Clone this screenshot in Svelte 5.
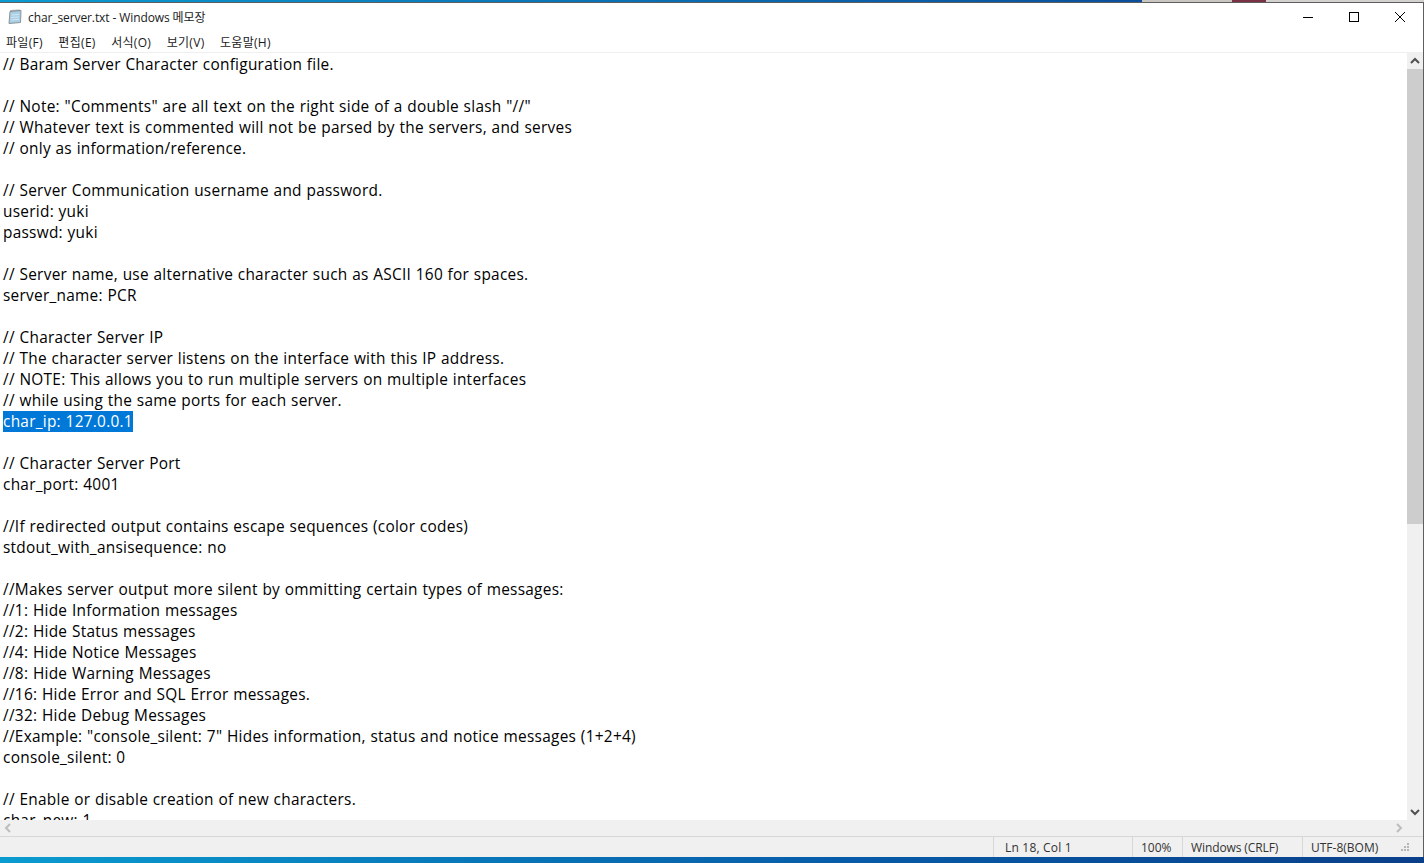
<script>
  const lines = [
    '// Baram Server Character configuration file.', '',
    '// Note: "Comments" are all text on the right side of a double slash "//"',
    '// Whatever text is commented will not be parsed by the servers, and serves',
    '// only as information/reference.', '',
    '// Server Communication username and password.',
    'userid: yuki', 'passwd: yuki', '',
    '// Server name, use alternative character such as ASCII 160 for spaces.',
    'server_name: PCR', '',
    '// Character Server IP',
    '// The character server listens on the interface with this IP address.',
    '// NOTE: This allows you to run multiple servers on multiple interfaces',
    '// while using the same ports for each server.',
    'char_ip: 127.0.0.1', '',
    '// Character Server Port', 'char_port: 4001', '',
    '//If redirected output contains escape sequences (color codes)',
    'stdout_with_ansisequence: no', '',
    '//Makes server output more silent by ommitting certain types of messages:',
    '//1: Hide Information messages', '//2: Hide Status messages', '//4: Hide Notice Messages',
    '//8: Hide Warning Messages', '//16: Hide Error and SQL Error messages.', '//32: Hide Debug Messages',
    '//Example: "console_silent: 7" Hides information, status and notice messages (1+2+4)',
    'console_silent: 0', '',
    '// Enable or disable creation of new characters.', 'char_new: 1'
  ];
  const menus = ['파일(F)', '편집(E)', '서식(O)', '보기(V)', '도움말(H)'];
</script>

<div class="page">
  <div class="strip">
    <div class="strip-blue"></div>
    <div class="strip-grey"></div>
    <div class="strip-pic"></div>
    <div class="strip-end"></div>
  </div>
  <div class="window">
    <header class="titlebar">
      <svg class="app-icon" width="16" height="16" viewBox="0 0 16 16">
        <path d="M3 2.5 L14 1.5 L13.5 13.5 L2 14.5 Z" fill="#a9cfe6" stroke="#8a949a" />
        <path d="M4.5 6 L12 5.4 M4.3 8.5 L12 7.9 M4.2 11 L12 10.4" stroke="#d6e6f0" />
        <path d="M4 2.4 V1 M6 2.2 V0.8 M8 2 V0.7 M10 1.9 V0.6 M12 1.7 V0.5" stroke="#777" />
      </svg>
      <span class="title">char_server.txt - Windows 메모장</span>
      <div class="controls">
        <svg width="12" height="12" viewBox="0 0 12 12"><path d="M1 6.5 H11" stroke="#000" /></svg>
        <svg width="12" height="12" viewBox="0 0 12 12"><rect x="1.5" y="1.5" width="9" height="9" fill="none" stroke="#000" /></svg>
        <svg width="12" height="12" viewBox="0 0 12 12"><path d="M1 1 L11 11 M11 1 L1 11" stroke="#000" /></svg>
      </div>
    </header>
    <nav class="menubar">
      {#each menus as m}<span>{m}</span>{/each}
    </nav>
    <div class="editor">
      <div class="text">
        {#each lines as l}
          <div class="line"><span class:sel={l.startsWith('char_ip')}>{l}</span></div>
        {/each}
      </div>
      <div class="vscroll">
        <svg class="arrow" width="16" height="16" viewBox="0 0 16 16"><path d="M4 10 L8 6 L12 10" fill="none" stroke="#505050" stroke-width="2" /></svg>
        <div class="track"><div class="thumb"></div></div>
        <svg class="arrow" width="16" height="16" viewBox="0 0 16 16"><path d="M4 6 L8 10 L12 6" fill="none" stroke="#505050" stroke-width="2" /></svg>
      </div>
    </div>
    <div class="hscroll">
      <svg width="16" height="16" viewBox="0 0 16 16"><path d="M10 4 L6 8 L10 12" fill="none" stroke="#bdbdbd" stroke-width="2" /></svg>
      <div class="spacer"></div>
      <svg width="16" height="16" viewBox="0 0 16 16"><path d="M6 4 L10 8 L6 12" fill="none" stroke="#bdbdbd" stroke-width="2" /></svg>
      <div class="corner"></div>
    </div>
    <footer class="status">
      <span class="cell pos">Ln 18, Col 1</span>
      <span class="cell zoom">100%</span>
      <span class="cell eol">Windows (CRLF)</span>
      <span class="cell enc">UTF-8(BOM)</span>
      <svg class="grip" width="12" height="12" viewBox="0 0 12 12" fill="#b5b5b5">
        <rect x="8" y="2" width="2" height="2"/><rect x="5" y="5" width="2" height="2"/><rect x="8" y="5" width="2" height="2"/>
        <rect x="2" y="8" width="2" height="2"/><rect x="5" y="8" width="2" height="2"/><rect x="8" y="8" width="2" height="2"/>
      </svg>
    </footer>
  </div>
  <div class="desktop"></div>
</div>

<style>
  :global(body) { margin: 0; background: #fff; overflow: hidden; }
  .page {
    width: 1424px; height: 863px; display: flex; flex-direction: column;
    font-family: "Open Sans", "Noto Sans CJK KR", sans-serif; color: #000; overflow: hidden;
  }
  .strip { height: 2px; display: flex; flex: none; }
  .strip-blue { width: 1142px; background: linear-gradient(90deg, #0a9bd0, #0a4e9c); }
  .strip-grey { width: 90px; background: #c9c6c2; }
  .strip-pic { width: 34px; background: #7b3144; }
  .strip-end { flex: 1; background: #d4d2cf; }
  .window {
    flex: 1; min-height: 0; display: flex; flex-direction: column;
    border-top: 1px solid #5e5e5e; border-right: 1px solid #5e5e5e; background: #fff;
  }
  .titlebar { height: 28px; flex: none; display: flex; align-items: center; padding-left: 7px; }
  .app-icon { flex: none; margin-right: 5px; }
  .title { font-size: 12px; color: #1a1a1a; letter-spacing: -0.1px; }
  .controls { margin-left: auto; display: flex; gap: 34px; padding-right: 17px; }
  .menubar {
    height: 21px; flex: none; display: flex; align-items: center; gap: 15.5px; padding-left: 6px;
    font-size: 12px; letter-spacing: 0.3px; color: #1a1a1a; border-bottom: 1px solid #efefef;
  }
  .editor { flex: 1; min-height: 0; display: flex; }
  .text {
    flex: 1; min-width: 0; overflow: hidden; padding: 1px 0 0 3px; box-sizing: border-box;
    font-size: 15.4px; line-height: 21px; letter-spacing: 0.27px; word-spacing: 0.4px;
  }
  .line { height: 21px; white-space: pre; }
  .sel { background: #0078d7; color: #fff; display: inline-block; }
  .vscroll { width: 16px; flex: none; display: flex; flex-direction: column; background: #f0f0f0; }
  .arrow { flex: none; }
  .track { flex: 1; min-height: 0; }
  .thumb { height: 455px; background: #cdcdcd; }
  .hscroll { height: 16px; flex: none; display: flex; background: #f0f0f0; }
  .spacer { flex: 1; }
  .corner { width: 16px; margin-right: 0; flex: none; background: #f0f0f0; }
  .status {
    height: 20px; flex: none; display: flex; align-items: center; background: #f0f0f0;
    border-top: 1px solid #d7d7d7; font-size: 12px; color: #333; padding-left: 993px;
  }
  .cell { height: 100%; display: flex; align-items: center; box-sizing: border-box; border-left: 1px solid #d7d7d7; padding-left: 11px; }
  .pos { width: 139px; letter-spacing: 0.2px; }
  .zoom { width: 50px; padding-left: 8px; }
  .eol { width: 120px; padding-left: 8px; letter-spacing: -0.1px; }
  .enc { width: 97px; padding-left: 8px; }
  .grip { flex: none; }
  .desktop { height: 6px; flex: none; background: linear-gradient(90deg, #0a9bd0, #075ba8 60%, #0a3f8a); }
</style>
